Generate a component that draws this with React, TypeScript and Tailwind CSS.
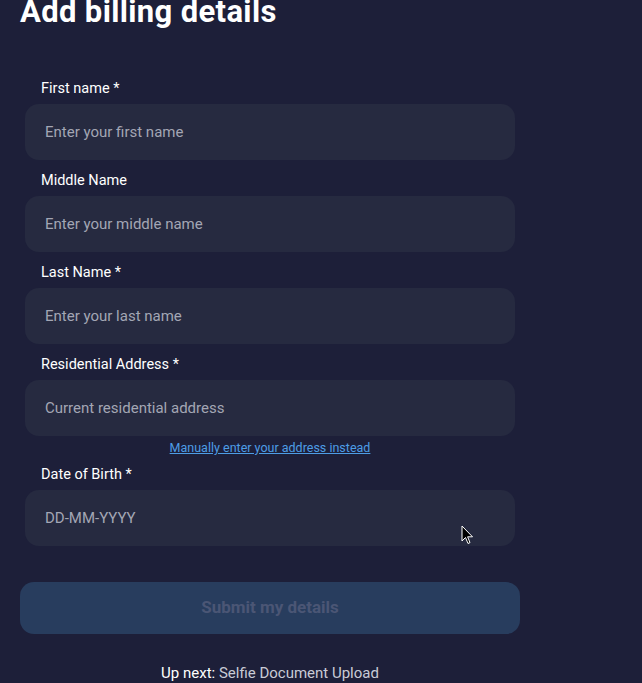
import React from 'react';

const fields = [
  { label: 'First name *', placeholder: 'Enter your first name' },
  { label: 'Middle Name', placeholder: 'Enter your middle name' },
  { label: 'Last Name *', placeholder: 'Enter your last name' },
  { label: 'Residential Address *', placeholder: 'Current residential address', link: true },
  { label: 'Date of Birth *', placeholder: 'DD-MM-YYYY' },
];

function Field({ label, placeholder, link }: { label: string; placeholder: string; link?: boolean }) {
  return (
    <div className="flex flex-col">
      <label className="mb-[5px] pl-4 text-[14.5px] leading-5 text-white">{label}</label>
      <input
        placeholder={placeholder}
        className="h-14 w-full rounded-[14px] bg-[#262a40] px-5 text-[15px] text-white placeholder:text-[#a3a6b4] outline-none"
      />
      {link && (
        <a href="#" className="mt-[4px] -mb-[2px] self-center text-[12.5px] leading-4 text-[#4d9de6] underline">
          Manually enter your address instead
        </a>
      )}
    </div>
  );
}

function Cursor() {
  return (
    <svg className="absolute left-[461px] top-[525px]" width="14" height="20" viewBox="0 0 14 20">
      <path d="M1 1 L1 16 L4.5 12.5 L7 18.5 L9 17.6 L6.6 11.8 L11.5 11.8 Z" fill="#000" stroke="#fff" strokeWidth="1" />
    </svg>
  );
}

export default function App() {
  return (
    <div className="relative h-[683px] w-[642px] overflow-hidden bg-[#1d1f39]" style={{ fontFamily: 'Roboto, "Open Sans", sans-serif' }}>
      <div className="px-5">
        <h1 className="-mt-[6px] text-[31px] font-bold leading-9 text-white tracking-[0.35px]">Add billing details</h1>

        <div className="mt-[49px] flex w-[500px] flex-col gap-[11px] px-[5px]">
          {fields.map((f) => (
            <Field key={f.label} {...f} />
          ))}
        </div>

        <button className="mt-9 h-[52px] w-[500px] rounded-[14px] bg-[#283d5e] text-[17px] font-bold text-[#4b5675]">
          Submit my details
        </button>

        <p className="mt-[29px] w-[500px] text-center text-[15px] leading-5 text-[#c9cbd6]">
          <span className="text-white">Up next:</span> Selfie Document Upload
        </p>
      </div>
      <Cursor />
    </div>
  );
}
